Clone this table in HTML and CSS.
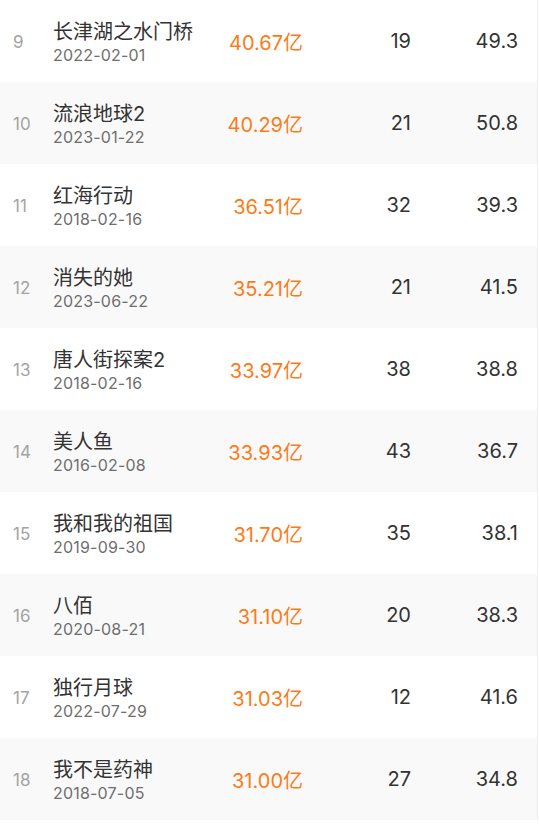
FILE: index.html
```html
<!DOCTYPE html>
<html lang="zh-CN">
<head>
<meta charset="utf-8">
<link rel="stylesheet" href="styles.css">
</head>
<body>
<div class="list">
  <div class="row"><div class="rank">9</div><div class="movie"><div class="title">长津湖之水门桥</div><div class="date">2022-02-01</div></div><div class="box">40.67亿</div><div class="count">19</div><div class="score">49.3</div></div>
  <div class="row alt"><div class="rank">10</div><div class="movie"><div class="title">流浪地球2</div><div class="date">2023-01-22</div></div><div class="box">40.29亿</div><div class="count">21</div><div class="score">50.8</div></div>
  <div class="row"><div class="rank">11</div><div class="movie"><div class="title">红海行动</div><div class="date">2018-02-16</div></div><div class="box">36.51亿</div><div class="count">32</div><div class="score">39.3</div></div>
  <div class="row alt"><div class="rank">12</div><div class="movie"><div class="title">消失的她</div><div class="date">2023-06-22</div></div><div class="box">35.21亿</div><div class="count">21</div><div class="score">41.5</div></div>
  <div class="row"><div class="rank">13</div><div class="movie"><div class="title">唐人街探案2</div><div class="date">2018-02-16</div></div><div class="box">33.97亿</div><div class="count">38</div><div class="score">38.8</div></div>
  <div class="row alt"><div class="rank">14</div><div class="movie"><div class="title">美人鱼</div><div class="date">2016-02-08</div></div><div class="box">33.93亿</div><div class="count">43</div><div class="score">36.7</div></div>
  <div class="row"><div class="rank">15</div><div class="movie"><div class="title">我和我的祖国</div><div class="date">2019-09-30</div></div><div class="box">31.70亿</div><div class="count">35</div><div class="score">38.1</div></div>
  <div class="row alt"><div class="rank">16</div><div class="movie"><div class="title">八佰</div><div class="date">2020-08-21</div></div><div class="box">31.10亿</div><div class="count">20</div><div class="score">38.3</div></div>
  <div class="row"><div class="rank">17</div><div class="movie"><div class="title">独行月球</div><div class="date">2022-07-29</div></div><div class="box">31.03亿</div><div class="count">12</div><div class="score">41.6</div></div>
  <div class="row alt"><div class="rank">18</div><div class="movie"><div class="title">我不是药神</div><div class="date">2018-07-05</div></div><div class="box">31.00亿</div><div class="count">27</div><div class="score">34.8</div></div>
</div>
</body>
</html>
```
FILE: styles.css
```css
html, body {
  margin: 0;
  padding: 0;
  background: #ffffff;
}
body {
  font-family: "Inter", "Noto Sans CJK SC", sans-serif;
  color: #333333;
}
.list {
  width: 537px;
  border-right: 1px solid #efefef;
}
.row {
  height: 82px;
  display: grid;
  grid-template-columns: 53px 1fr 80px 108px 107px;
  align-items: center;
  padding-right: 19px;
  background: #ffffff;
}
.row.alt {
  background: #f9f9f9;
}
.rank {
  padding-left: 13px;
  padding-top: 1px;
  font-size: 17px;
  color: #a3a3a3;
}
.movie {
  display: flex;
  flex-direction: column;
  gap: 1px;
  padding-top: 2px;
}
.title {
  font-size: 20px;
  line-height: 25px;
  color: #333333;
}
.date {
  font-size: 16px;
  line-height: 19px;
  color: #6e6e6e;
  letter-spacing: 0.2px;
}
.box {
  text-align: right;
  font-size: 20px;
  color: #ff7a15;
  padding-top: 1px;
}
.count {
  text-align: right;
  font-size: 20px;
  color: #333333;
}
.score {
  text-align: right;
  font-size: 20px;
  color: #333333;
}
```
